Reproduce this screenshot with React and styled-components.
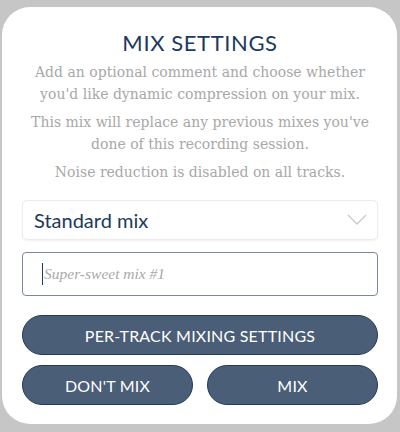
import React from "react";
import styled, { createGlobalStyle } from "styled-components";

const Global = createGlobalStyle`
  html, body { margin: 0; padding: 0; background: #c6c6c6; }
  body { width: 400px; height: 432px; overflow: hidden; }
`;

const Page = styled.div`
  width: 400px;
  height: 432px;
  box-sizing: border-box;
  padding: 7px 3px 8px 2px;
  background: #c6c6c6;
`;

const Modal = styled.div`
  box-sizing: border-box;
  height: 417px;
  background: #fff;
  border-radius: 28px;
  padding: 23px 19px 0 20px;
  display: flex;
  flex-direction: column;
`;

const Title = styled.h1`
  margin: 0;
  text-align: center;
  font-family: Lato, "Open Sans", sans-serif;
  font-weight: 400;
  font-size: 22px;
  line-height: 26px;
  letter-spacing: 0.6px;
  color: #1c3a5e;
`;

const Para = styled.p`
  margin: ${(p) => p.$top}px auto 0;
  max-width: 340px;
  text-align: center;
  font-family: "DejaVu Serif", "Liberation Serif", serif;
  font-size: 14px;
  line-height: 22px;
  color: #a8a8a8;
`;

const Select = styled.div`
  margin-top: 17px;
  height: 40px;
  box-sizing: border-box;
  border: 1px solid #ececec;
  border-radius: 5px;
  box-shadow: 0 1px 2px rgba(0,0,0,0.06);
  display: flex;
  align-items: center;
  justify-content: space-between;
  padding: 0 10px 0 11px;
  font-family: Lato, "Open Sans", sans-serif;
  font-size: 20px;
  color: #1c3a5e;
`;

const Input = styled.div`
  margin-top: 12px;
  height: 44px;
  box-sizing: border-box;
  border: 1px solid #7b8897;
  border-radius: 4px;
  display: flex;
  align-items: center;
  padding-left: 19px;
  font-family: "Liberation Serif", "DejaVu Serif", serif;
  font-style: italic;
  font-size: 15.5px;
  color: #a9a9a9;
`;

const Caret = styled.span`
  display: inline-block;
  width: 1px;
  height: 22px;
  background: #1c3a5e;
  margin-right: 1px;
`;

const Button = styled.button`
  height: 40px;
  box-sizing: border-box;
  border: 1px solid #1f3d5c;
  border-radius: 20px;
  background: #4a5e77;
  color: #fff;
  font-family: Lato, "Open Sans", sans-serif;
  font-size: 16px;
  letter-spacing: 0.2px;
  text-transform: uppercase;
  padding: 0;
  width: 100%;
`;

const Wide = styled(Button)`
  margin-top: 19px;
`;

const Row = styled.div`
  margin-top: 10px;
  display: grid;
  grid-template-columns: 1fr 1fr;
  gap: 14px;
`;

export default function App() {
  return (
    <>
      <Global />
      <Page>
        <Modal>
          <Title>MIX SETTINGS</Title>
          <Para $top={5}>
            Add an optional comment and choose whether you'd like dynamic compression on your mix.
          </Para>
          <Para $top={6}>
            This mix will replace any previous mixes you've done of this recording session.
          </Para>
          <Para $top={6}>Noise reduction is disabled on all tracks.</Para>
          <Select>
            <span>Standard mix</span>
            <svg width="20" height="12" viewBox="0 0 20 12">
              <path d="M1 1 L10 10 L19 1" fill="none" stroke="#c9c9c9" strokeWidth="1.3" />
            </svg>
          </Select>
          <Input>
            <Caret />
            Super-sweet mix #1
          </Input>
          <Wide>Per-track mixing settings</Wide>
          <Row>
            <Button>Don't mix</Button>
            <Button>Mix</Button>
          </Row>
        </Modal>
      </Page>
    </>
  );
}
